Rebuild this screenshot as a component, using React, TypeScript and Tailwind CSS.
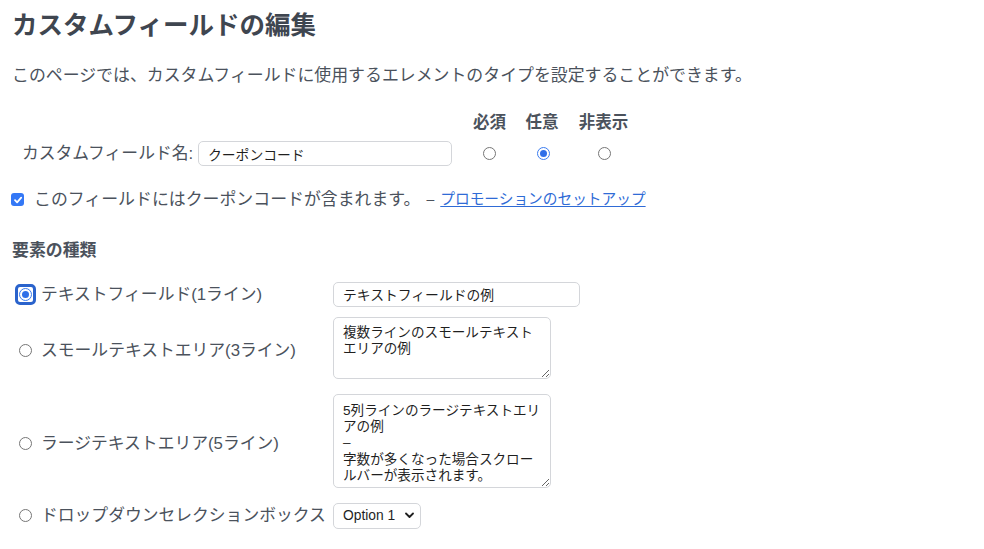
import React from "react";

const font = { fontFamily: '"Liberation Sans", "Noto Sans CJK JP", sans-serif' };

function Radio({ checked = false }: { checked?: boolean }) {
  if (checked) {
    return (
      <span className="inline-flex h-[13px] w-[13px] shrink-0 items-center justify-center rounded-full border border-[#3b7cf0] bg-white">
        <span className="h-[7px] w-[7px] rounded-full bg-[#2f6fe8]" />
      </span>
    );
  }
  return <span className="inline-block h-[13px] w-[13px] shrink-0 rounded-full border border-[#767676] bg-white" />;
}

function FocusedRadio() {
  return (
    <span className="-m-[4px] inline-flex shrink-0 items-center justify-center rounded-[5px] border-[3px] border-[#2a63cc] p-[1px]">
      <Radio checked />
    </span>
  );
}

export default function App() {
  return (
    <div className="min-h-[549px] w-[984px] bg-white pl-[12px] pt-[8px] text-[#4b525c]" style={font}>
      <h1 className="text-[25.5px] font-bold leading-[34px] text-[#3f4650]">カスタムフィールドの編集</h1>

      <p className="mt-[22px] text-[16.9px] leading-[24px]">
        このページでは、カスタムフィールドに使用するエレメントのタイプを設定することができます。
      </p>

      <div className="mt-[22px] grid grid-cols-[176px_254px_64px_52px_71px] pl-[10px]">
        <div />
        <div />
        <div className="pl-[11px] text-center text-[16.5px] font-bold leading-[24px]">必須</div>
        <div className="text-center text-[16.5px] font-bold leading-[24px]">任意</div>
        <div className="text-center text-[16.5px] font-bold leading-[24px]">非表示</div>

        <div className="mt-[7px] flex h-[25px] items-center whitespace-nowrap text-[16.8px]">カスタムフィールド名:</div>
        <div className="mt-[7px]">
          <input
            type="text"
            defaultValue="クーポンコード"
            className="h-[25px] w-[254px] rounded-[5px] border border-[#d4d6da] bg-white px-[9px] text-[13.8px] text-[#1f1f1f] outline-none"
          />
        </div>
        <div className="mt-[7px] flex h-[25px] items-center justify-center pl-[11px]">
          <Radio />
        </div>
        <div className="mt-[7px] flex h-[25px] items-center justify-center pl-[2px]">
          <Radio checked />
        </div>
        <div className="mt-[7px] flex h-[25px] items-center justify-center pl-[1px]">
          <Radio />
        </div>
      </div>

      <div className="mt-[21px] flex h-[24px] items-center">
        <span className="-ml-[1px] inline-flex h-[13px] w-[13px] items-center justify-center rounded-[3px] bg-[#3478f6]">
          <svg width="10" height="10" viewBox="0 0 10 10" fill="none">
            <path d="M2 5.2 L4.1 7.3 L8.2 2.6" stroke="white" strokeWidth="1.8" strokeLinecap="round" strokeLinejoin="round" />
          </svg>
        </span>
        <span className="ml-[10px] text-[16.9px]">このフィールドにはクーポンコードが含まれます。</span>
        <span className="ml-[6px] text-[14px]">–</span>
        <a href="#" className="ml-[6px] text-[14.7px] text-[#2f6bd6] underline underline-offset-2">
          プロモーションのセットアップ
        </a>
      </div>

      <h2 className="mt-[27px] text-[16.9px] font-bold leading-[24px]">要素の種類</h2>

      <div className="mt-[19px] flex flex-col gap-[10px]">
        <div className="flex items-center">
          <div className="flex w-[321px] items-center whitespace-nowrap pl-[7px] text-[16.8px]">
            <FocusedRadio />
            <span className="ml-[9px]">テキストフィールド(1ライン)</span>
          </div>
          <input
            type="text"
            defaultValue="テキストフィールドの例"
            className="h-[25px] w-[247px] rounded-[5px] border border-[#d4d6da] bg-white px-[9px] text-[13.8px] text-[#1f1f1f] outline-none"
          />
        </div>

        <div className="flex items-center">
          <div className="flex w-[321px] items-center whitespace-nowrap pl-[7px] text-[16.8px]">
            <Radio />
            <span className="ml-[9px]">スモールテキストエリア(3ライン)</span>
          </div>
          <div className="pb-[5px]">
            <textarea
              defaultValue={"複数ラインのスモールテキスト\nエリアの例"}
              className="block h-[62px] w-[218px] overflow-hidden rounded-[5px] border border-[#d4d6da] bg-white pl-[9px] pr-[2px] pt-[7px] text-[13.6px] leading-[16.5px] text-[#1f1f1f] outline-none"
              style={{ whiteSpace: "pre" }}
            />
          </div>
        </div>

        <div className="flex items-center">
          <div className="flex w-[321px] items-center whitespace-nowrap pl-[7px] text-[16.8px]">
            <Radio />
            <span className="ml-[9px]">ラージテキストエリア(5ライン)</span>
          </div>
          <div className="pb-[5px]">
            <textarea
              defaultValue={"5列ラインのラージテキストエリ\nアの例\n–\n字数が多くなった場合スクロー\nルバーが表示されます。"}
              className="block h-[94px] w-[218px] overflow-hidden rounded-[5px] border border-[#d4d6da] bg-white pl-[9px] pr-[2px] pt-[8px] text-[13.6px] leading-[16.3px] text-[#1f1f1f] outline-none"
              style={{ whiteSpace: "pre" }}
            />
          </div>
        </div>

        <div className="flex items-center">
          <div className="flex w-[321px] items-center whitespace-nowrap pl-[7px] text-[16.8px]">
            <Radio />
            <span className="ml-[9px]">ドロップダウンセレクションボックス</span>
          </div>
          <div className="relative h-[26px] w-[88px]">
            <select
              defaultValue="1"
              className="h-[26px] w-[88px] appearance-none rounded-[5px] border border-[#d4d6da] bg-white pl-[9px] text-[13.8px] text-[#1f1f1f] outline-none"
              style={{ fontFamily: '"Liberation Sans", sans-serif' }}
            >
              <option value="1">Option 1</option>
              <option value="2">Option 2</option>
            </select>
            <svg
              className="pointer-events-none absolute right-[7px] top-[9px]"
              width="9"
              height="7"
              viewBox="0 0 9 7"
              fill="none"
            >
              <path d="M1 1.5 L4.5 5 L8 1.5" stroke="#1f1f1f" strokeWidth="1.8" strokeLinecap="round" strokeLinejoin="round" />
            </svg>
          </div>
        </div>
      </div>
    </div>
  );
}
